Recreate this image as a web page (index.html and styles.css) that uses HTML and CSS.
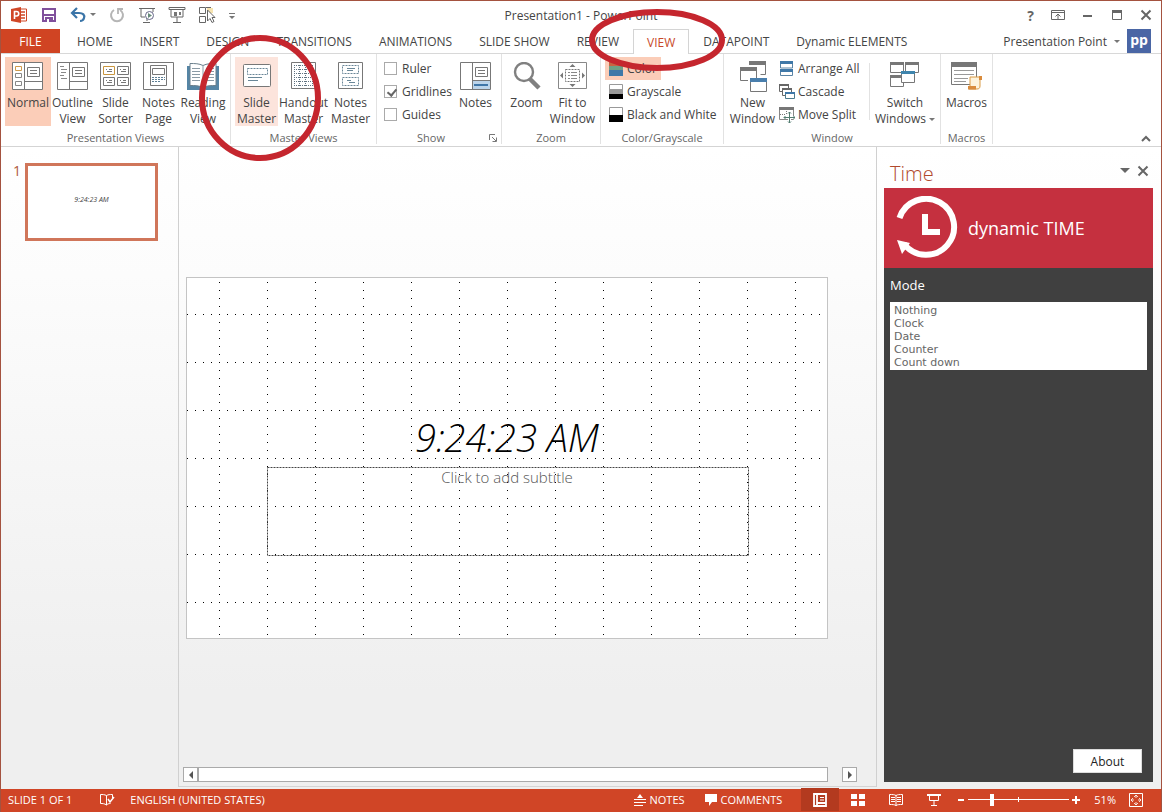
FILE: index.html
```html
<!DOCTYPE html>
<html lang="en">
<head>
<meta charset="utf-8">
<title>Presentation1 - PowerPoint</title>
<link rel="stylesheet" href="styles.css">
</head>
<body>
<div class="window">
  <header class="titlebar">
    <div class="quick">
      <button class="icon-btn" aria-label="PowerPoint"><svg width="18" height="18" viewBox="0 0 18 18"><path d="M9 3h7.500v12H9z" fill="#fff" stroke="#d04727"/><path d="M11 6h4M11 9h4M11 12h4" stroke="#d04727" stroke-width="1.500"/><path d="M1 3l10-2v16L1 15z" fill="#d04727"/><path d="M4.500 13V5.500h2a2 2 0 0 1 0 4.500h-2" fill="none" stroke="#fff" stroke-width="1.600"/></svg></button>
      <button class="icon-btn" aria-label="Save"><svg width="18" height="18" viewBox="0 0 18 18"><path d="M3 3h12v12H3z" fill="#fff" stroke="#80509c" stroke-width="2"/><path d="M3 9h12" stroke="#80509c" stroke-width="2"/><path d="M5 11h8v5H5z" fill="#80509c"/><path d="M7 13h2v3H7z" fill="#fff"/></svg></button>
      <button class="icon-btn" aria-label="Undo"><svg width="26" height="18" viewBox="0 0 26 18"><path d="M2 7h7c4 0 6 2 5 5-.500 2-2 3-4 3" fill="none" stroke="#3b75a8" stroke-width="2.200"/><path d="M7 2L2 7l5 5" fill="none" stroke="#3b75a8" stroke-width="2.200"/><path d="M20 7h6l-3 3z" fill="#777"/></svg></button>
      <button class="icon-btn" aria-label="Repeat"><svg width="18" height="18" viewBox="0 0 18 18"><path d="M6 4a6 6 0 1 0 6 0" fill="none" stroke="#b5b5b5" stroke-width="2"/><path d="M10 8V3h5" fill="none" stroke="#b5b5b5" stroke-width="1.800"/></svg></button>
      <button class="icon-btn" aria-label="Start from beginning"><svg width="18" height="18" viewBox="0 0 18 18"><path d="M1 2.500h16M3 3v8h4M9 15v-3M5 16.500h7M15 3v3" fill="none" stroke="#666"/><circle cx="11.500" cy="9.500" r="4" fill="#fff" stroke="#668" /><path d="M10 7l4 2.500-4 2.500z" fill="#668a7a"/></svg></button>
      <button class="icon-btn" aria-label="Slide show"><svg width="18" height="18" viewBox="0 0 18 18"><path d="M1 1.500h16v2H1zM3 4v7h12V4M9 11v5M5 16.500h8" fill="none" stroke="#666"/><path d="M6 6h3v4H6zM11 6h2v3h-2z" fill="#777"/></svg></button>
      <button class="icon-btn" aria-label="Select objects"><svg width="18" height="18" viewBox="0 0 18 18"><path d="M9 2h6v5H9z" fill="#f6e3b0"/><path d="M1.500 1.500h6v6h-6zM1.500 10.500h6v6h-6zM8 1.500h5" fill="none" stroke="#666"/><path d="M9.500 4v11l2.500-2.500 2 4 2-1-2-4h3z" fill="#fff" stroke="#666"/></svg></button>
      <button class="icon-btn" aria-label="Customize toolbar"><svg width="8" height="12" viewBox="0 0 8 12"><path d="M1 4.500h6" stroke="#777"/><path d="M1 7h6l-3 3z" fill="#777"/></svg></button>
    </div>
    <h1 class="title">Presentation1 - PowerPoint</h1>
    <div class="winctl">
      <button class="icon-btn help" aria-label="Help">?</button>
      <button class="icon-btn" aria-label="Ribbon display options"><svg width="14" height="12" viewBox="0 0 14 12"><path d="M.500 1.500h13v9H.500zM.500 3.500h13M7 10V5M4.500 7.500L7 5l2.500 2.500" fill="none" stroke="#666"/></svg></button>
      <button class="icon-btn" aria-label="Minimize"><svg width="12" height="12" viewBox="0 0 12 12"><path d="M1 7h9" stroke="#666" stroke-width="2"/></svg></button>
      <button class="icon-btn" aria-label="Maximize"><svg width="12" height="12" viewBox="0 0 12 12"><path d="M1.500 2h9v8.500h-9z" fill="none" stroke="#666"/><path d="M1 2.500h10" stroke="#666" stroke-width="3"/></svg></button>
      <button class="icon-btn" aria-label="Close"><svg width="12" height="12" viewBox="0 0 12 12"><path d="M1.500 1.500l9 9M10.500 1.500l-9 9" stroke="#666" stroke-width="2"/></svg></button>
    </div>
  </header>

  <nav class="tabs">
    <button class="tab file">FILE</button>
    <button class="tab">HOME</button>
    <button class="tab">INSERT</button>
    <button class="tab">DESIGN</button>
    <button class="tab">TRANSITIONS</button>
    <button class="tab">ANIMATIONS</button>
    <button class="tab">SLIDE SHOW</button>
    <button class="tab">REVIEW</button>
    <button class="tab active">VIEW</button>
    <button class="tab">DATAPOINT</button>
    <button class="tab">Dynamic ELEMENTS</button>
    <button class="account">Presentation Point<span class="caret"></span><span class="avatar">pp</span></button>
  </nav>

  <section class="ribbon">
    <div class="group views">
      <div class="tools">
        <button class="tool on"><svg width="32" height="28" viewBox="0 0 32 28"><path d="M.500.500h30v27H.500z" fill="#fff" stroke="#777"/><path d="M12.500 1v26M13 19.500h17" stroke="#777"/><path d="M15.500 5.500h12v9h-12zM18 8.500h7M18 11.500h7" fill="none" stroke="#777"/><path d="M3.500 4.500h6v4h-6z" fill="none" stroke="#d09a4a"/><path d="M3.500 11.500h6v4h-6zM3.500 19.500h6v4h-6z" fill="none" stroke="#888"/></svg><span>Normal</span></button>
        <button class="tool"><svg width="32" height="28" viewBox="0 0 32 28"><path d="M.500.500h30v27H.500zM12.500 1v26M13 19.500h17M15.500 5.500h12v9h-12zM18 8.500h7M18 11.500h7" fill="none" stroke="#777"/><path d="M3 4.500h4M4 7.500h6M4 10.500h5M3 13.500h4M4 16.500h6" stroke="#888"/></svg><span>Outline<br>View</span></button>
        <button class="tool"><svg width="32" height="28" viewBox="0 0 32 28"><path d="M.500.500h30v27H.500z" fill="none" stroke="#777"/><path d="M17.500 4.500h11v8h-11zM3.500 15.500h11v8h-11zM17.500 15.500h11v8h-11z" fill="none" stroke="#777"/><path d="M3.500 4.500h11v8h-11z" fill="none" stroke="#c9963f"/><path d="M6 7.500h1M9 7.500h3M7 9.500h5M20 7.500h1M23 7.500h3M21 9.500h5M6 18.500h1M9 18.500h3M7 20.500h5M20 18.500h1M23 18.500h3M21 20.500h5" stroke="#777"/></svg><span>Slide<br>Sorter</span></button>
        <button class="tool"><svg width="32" height="28" viewBox="0 0 32 28"><path d="M.500.500h30v27H.500zM7.500 3.500h16v20h-16zM9.500 6.500h12v6h-12z" fill="none" stroke="#777"/><path d="M9 15.500h13M9 17.500h13M9 19.500h9" stroke="#5d7f95" stroke-dasharray="2 1"/></svg><span>Notes<br>Page</span></button>
        <button class="tool wide"><svg width="32" height="28" viewBox="0 0 32 28"><path d="M0 4h32v24H19l-3-1-3 1H0z" fill="#5585a5"/><path d="M3 1.500c5 0 9 0 13 2 4-2 8-2 13-2v22c-5 0-9 0-13 2-4-2-8-2-13-2z" fill="#fff" stroke="#6b7f8c"/><path d="M16 3v22M5 6.500h8M5 9.500h8M5 12.500h8M5 15.500h8M5 18.500h8M19 6.500h8M19 9.500h8M19 12.500h8M19 15.500h8M19 18.500h8" stroke="#8a9aa5"/></svg><span>Reading<br>View</span></button>
      </div>
      <div class="caption">Presentation Views</div>
    </div>
    <div class="group master">
      <div class="tools">
        <button class="tool hover"><svg width="28" height="28" viewBox="0 0 28 28"><rect x=".500" y="2.500" width="27" height="22" rx="1" fill="#fff" stroke="#777"/><path d="M4.500 6.500h20v6h-20z" fill="none" stroke="#6a8798" stroke-dasharray="2 1"/><path d="M5 15.500h14M5 18.500h10" stroke="#6a8798"/></svg><span>Slide<br>Master</span></button>
        <button class="tool wide"><svg width="26" height="28" viewBox="0 0 26 28"><path d="M.500.500h24v26H.500z" fill="none" stroke="#777"/><path d="M3 3.500h20M3 7.500h20M3 11.500h20M3 15.500h20M3 19.500h20M3 23.500h20" stroke="#5f7280" stroke-dasharray="1 1"/><path d="M3.500 3v21M8.500 3v21M14.500 3v21M21.500 3v21" stroke="#5f7280" stroke-dasharray="1 1"/></svg><span>Handout<br>Master</span></button>
        <button class="tool"><svg width="26" height="28" viewBox="0 0 26 28"><path d="M.500.500h24v26H.500z" fill="none" stroke="#777"/><path d="M4.500 3.500h16v8h-16zM4.500 15.500h16v8h-16z" fill="none" stroke="#6a8798" stroke-dasharray="2 1"/><path d="M9 6.500h8M9 8.500h6M9 18.500h4M11 20.500h6" stroke="#6a8798"/></svg><span>Notes<br>Master</span></button>
      </div>
      <div class="caption">Master Views</div>
    </div>
    <div class="group show">
      <div class="tools">
        <div class="stack checks">
          <label><input type="checkbox">Ruler</label>
          <label><input type="checkbox" checked>Gridlines</label>
          <label><input type="checkbox">Guides</label>
        </div>
        <button class="tool"><svg width="32" height="28" viewBox="0 0 32 28"><path d="M.500.500h30v27H.500z" fill="#fff" stroke="#777"/><path d="M13 19h17v8H13z" fill="#bcd4ea"/><path d="M12.500 1v26M13 18.500h17M15.500 5.500h12v9h-12zM18 8.500h7M18 11.500h7" fill="none" stroke="#777"/><path d="M14 23h14" stroke="#3f76a8" stroke-width="2"/></svg><span>Notes</span></button>
      </div>
      <div class="caption">Show</div>
      <button class="launcher" aria-label="Grid settings"><svg width="8" height="8" viewBox="0 0 8 8"><path d="M.500 6V.500H6M3 3l4 4M7.500 3.500v4h-4" fill="none" stroke="#777"/></svg></button>
    </div>
    <div class="group zooming">
      <div class="tools">
        <button class="tool"><svg width="28" height="28" viewBox="0 0 28 28"><circle cx="11" cy="10" r="9" fill="none" stroke="#808080" stroke-width="2.400"/><path d="M17 17l9 9" stroke="#808080" stroke-width="4.500"/></svg><span>Zoom</span></button>
        <button class="tool wide"><svg width="30" height="28" viewBox="0 0 30 28"><path d="M.500.500h28v26H.500z" fill="none" stroke="#888"/><path d="M7.500 7.500h14v12h-14z" fill="none" stroke="#777" stroke-dasharray="2 1"/><path d="M10 10.500h2M13 10.500h6M10 13.500h2M13 13.500h6M10 16.500h2M13 16.500h6" stroke="#888"/><path d="M11.500 5l3-3 3 3zM11.500 22h6l-3 3zM5 10.500v6l-3-3zM24 10.500v6l3-3z" fill="#777"/></svg><span>Fit to<br>Window</span></button>
      </div>
      <div class="caption">Zoom</div>
    </div>
    <div class="group color">
      <div class="tools">
        <div class="stack">
          <button class="row on"><svg width="14" height="16" viewBox="0 0 14 16"><path d="M0 0h14v5H0z" fill="#c96442"/><path d="M0 5h14v5H0z" fill="#6f9f85"/><path d="M0 9h14v6H0z" fill="#3f78a8"/></svg>Color</button>
          <button class="row"><svg width="14" height="16" viewBox="0 0 14 16"><path d="M.500.500h13v14H.500z" fill="#fff" stroke="#999"/><path d="M0 5h14v5H0z" fill="#999"/><path d="M0 10h14v5H0z"/></svg>Grayscale</button>
          <button class="row"><svg width="14" height="16" viewBox="0 0 14 16"><path d="M.500.500h13v14H.500z" fill="#fff" stroke="#999"/><path d="M0 8h14v7H0z"/></svg>Black and White</button>
        </div>
      </div>
      <div class="caption">Color/Grayscale</div>
    </div>
    <div class="group">
      <div class="tools">
        <button class="tool wide newwin"><svg width="28" height="32" viewBox="0 0 28 32"><path d="M10.500.500h16v13h-5M1.500 7.500h16v12M1.500 7.500v12H9" fill="none" stroke="#777"/><path d="M10 0h17v4H10zM1 6h17v4H1z" fill="#777"/><path d="M11.500 17.500h16v13h-16z" fill="#fff" stroke="#777"/><path d="M11 17h17v4H11z" fill="#4a7fad"/></svg><span>New<br>Window</span></button>
        <div class="stack arrange">
          <button class="row"><svg width="16" height="16" viewBox="0 0 16 16"><path d="M1.500 1h12v6h-12zM1.500 8.500h12v6h-12z" fill="#fff" stroke="#5b84a5"/><path d="M1 0h13v3H1zM1 8h13v3H1z" fill="#3f78a8"/></svg>Arrange All</button>
          <button class="row"><svg width="16" height="16" viewBox="0 0 16 16"><path d="M.500.500h9v7h-9z" fill="#fff" stroke="#666"/><path d="M0 1h10" stroke="#666" stroke-width="2"/><path d="M3.500 4.500h9v7h-9z" fill="#fff" stroke="#666"/><path d="M3 5h10" stroke="#666" stroke-width="2"/><path d="M6.500 8.500h9v6h-9z" fill="#fff" stroke="#4c7a8c"/><path d="M6 9h10" stroke="#3f78a8" stroke-width="2"/></svg>Cascade</button>
          <button class="row"><svg width="16" height="16" viewBox="0 0 16 16"><path d="M.500.500h14v12H.500z" fill="#fff" stroke="#888"/><path d="M0 0h15v3H0z" fill="#777"/><path d="M1 7.500h6M7.500 4v3" stroke="#777" stroke-dasharray="1 1"/><path d="M10.500 5v11M5 10.500h11" stroke="#fff" stroke-width="3"/><path d="M10.500 5v11M5 10.500h11M9 6.500l1.500-1.500L12 6.500M9 14.500l1.500 1.500 1.500-1.500M6.500 9L5 10.500 6.500 12M14.500 9l1.500 1.500-1.500 1.500" fill="none" stroke="#527c70"/></svg>Move Split</button>
        </div>
        <span class="divider"></span>
        <button class="tool switch"><svg width="30" height="28" viewBox="0 0 30 28"><path d="M.500.500h13v10H.500zM15.500.500h13v10h-13zM.500 14.500h13v10H.500z" fill="#fff" stroke="#777"/><path d="M0 0h14v3H0zM15 0h14v3H15zM0 13h14v3H0z" fill="#777"/><path d="M11.500 9.500h13v11h-13z" fill="#fff" stroke="#777"/><path d="M11 9h14v3H11z" fill="#3f85ad"/></svg><span>Switch<br>Windows<i class="caret"></i></span></button>
      </div>
      <div class="caption">Window</div>
    </div>
    <div class="group">
      <div class="tools">
        <button class="tool"><svg width="32" height="28" viewBox="0 0 32 28"><path d="M.500.500h25v22H.500z" fill="#fff" stroke="#777"/><path d="M0 0h26v5H0z" fill="#777"/><path d="M3 8.500h20M3 12.500h20M3 16.500h14M3 19.500h12" stroke="#999"/><path d="M19 26V15h10v9c0 2-1 3-3 3h-8" fill="#fdf3dc" stroke="#d99a45"/><path d="M17 24h8v3.500h-8zM28 14h3v4h-3z" fill="#d98b3c"/></svg><span>Macros</span></button>
      </div>
      <div class="caption">Macros</div>
    </div>
    <button class="collapse" aria-label="Collapse ribbon"><svg width="10" height="8" viewBox="0 0 10 8"><path d="M1 6l4-4 4 4" fill="none" stroke="#666" stroke-width="2"/></svg></button>
  </section>

  <main class="body">
    <aside class="thumbs">
      <span class="num">1</span>
      <button class="thumb">9:24:23 AM</button>
    </aside>
    <section class="stage">
      <div class="canvas">
        <div class="slide">
          <svg class="grid" viewBox="0 0 640 360">
            <path d="M0 36.500H636M0 84.500H636M0 132.500H636M0 180.500H636M0 228.500H636M0 276.500H636M0 324.500H636" stroke="#000" stroke-dasharray="1 7"/>
            <path d="M32.500 4V360M80.500 4V360M128.500 4V360M176.500 4V360M224.500 4V360M272.500 4V360M320.500 4V360M368.500 4V360M416.500 4V360M464.500 4V360M512.500 4V360M560.500 4V360M608.500 4V360" stroke="#000" stroke-dasharray="1 7"/>
            <rect x="80.500" y="189.500" width="481" height="88" fill="none" stroke="#444" stroke-dasharray="2 1"/>
          </svg>
          <p class="clock">9:24:23 AM</p>
          <p class="subtitle">Click to add subtitle</p>
        </div>
      </div>
      <div class="scroll">
        <button aria-label="Scroll left"><svg width="6" height="8" viewBox="0 0 6 8"><path d="M5 0v8L1 4z" fill="#555"/></svg></button>
        <div class="bar"></div>
        <button aria-label="Scroll right"><svg width="6" height="8" viewBox="0 0 6 8"><path d="M1 0v8l4-4z" fill="#555"/></svg></button>
      </div>
    </section>
    <aside class="pane">
      <div class="panehead">
        <h2>Time</h2>
        <button class="icon-btn" aria-label="Pane options"><svg width="10" height="6" viewBox="0 0 10 6"><path d="M0 0h10L5 5z" fill="#666"/></svg></button>
        <button class="icon-btn" aria-label="Close pane"><svg width="12" height="12" viewBox="0 0 12 12"><path d="M1.500 1.500l9 9M10.500 1.500l-9 9" stroke="#666" stroke-width="2"/></svg></button>
      </div>
      <div class="banner">
        <svg width="62" height="64" viewBox="0 0 62 64"><path d="M3.500 22A28 28 0 1 1 8 48" fill="none" stroke="#fff" stroke-width="6"/><path d="M1 44l13 3-8 11z" fill="#fff"/><path d="M29 18v18h15" fill="none" stroke="#fff" stroke-width="6"/></svg>
        <span>dynamic TIME</span>
      </div>
      <div class="settings">
        <label for="mode">Mode</label>
        <select id="mode" size="5">
          <option>Nothing</option>
          <option>Clock</option>
          <option>Date</option>
          <option>Counter</option>
          <option>Count down</option>
        </select>
        <button class="about">About</button>
      </div>
    </aside>
  </main>

  <footer class="status">
    <span>SLIDE 1 OF 1</span>
    <button class="icon-btn spell" aria-label="Proofing"><svg width="16" height="14" viewBox="0 0 16 14"><path d="M7.500 2.500c-2-1-4-1-6-1v9c2 0 4 0 6 1.500 1-1 2-1.500 4-1.500M7.500 2.500V12M7.500 2.500c2-1 3-1 6-1V5" fill="none" stroke="#fff"/><path d="M9 6l2 3 4-5" fill="none" stroke="#fff" stroke-width="1.500"/></svg></button>
    <button class="text">ENGLISH (UNITED STATES)</button>
    <span class="spacer"></span>
    <button class="text notes"><svg width="12" height="12" viewBox="0 0 12 12"><path d="M0 5.500h12M0 8.500h12M0 11.500h9" stroke="#fff"/><path d="M3 4l3-4 3 4z" fill="#fff"/></svg>NOTES</button>
    <button class="text comments"><svg width="12" height="12" viewBox="0 0 12 12"><path d="M0 0h12v8H7l-3 4V8H0z" fill="#fff"/></svg>COMMENTS</button>
    <button class="view on" aria-label="Normal view"><svg width="14" height="14" viewBox="0 0 14 14"><path d="M1 1h12v12H1zM4 1v12M4 10h9" fill="none" stroke="#fff" stroke-width="1.800"/><path d="M7 4.500h4M7 7h4" stroke="#fff"/></svg></button>
    <button class="view" aria-label="Slide sorter"><svg width="14" height="14" viewBox="0 0 14 14"><path d="M0 1h6v5H0zM8 1h6v5H8zM0 8h6v5H0zM8 8h6v5H8z" fill="#fff"/></svg></button>
    <button class="view" aria-label="Reading view"><svg width="14" height="14" viewBox="0 0 14 14"><path d="M.500 1.500c3 0 5 0 6.500 1 1.500-1 3.500-1 6.500-1v10c-3 0-5 0-6.500 1-1.500-1-3.500-1-6.500-1zM7 2v11M2 4.500h4M2 6.500h4M2 8.500h4M8 4.500h4M8 6.500h4M8 8.500h4" fill="none" stroke="#fff"/></svg></button>
    <button class="view" aria-label="Slide show"><svg width="14" height="14" viewBox="0 0 14 14"><path d="M0 2h14" stroke="#fff" stroke-width="2"/><path d="M2.500 2v5.500h9V2M7 8v4M4 12.500h6" fill="none" stroke="#fff"/></svg></button>
    <button class="icon-btn" aria-label="Zoom out"><svg width="8" height="8" viewBox="0 0 8 8"><path d="M1 4h6" stroke="#fff" stroke-width="2"/></svg></button>
    <input class="zoom" type="range" min="10" max="400" value="98" aria-label="Zoom">
    <button class="icon-btn" aria-label="Zoom in"><svg width="8" height="8" viewBox="0 0 8 8"><path d="M0 4h8M4 0v8" stroke="#fff" stroke-width="2"/></svg></button>
    <button class="text pct">51%</button>
    <button class="icon-btn" aria-label="Fit slide"><svg width="14" height="14" viewBox="0 0 14 14"><path d="M.500.500h13v13H.500z" fill="none" stroke="#fff"/><path d="M7 2v3M7 9v3M2 7h3M9 7h3M5 4l2-2 2 2M5 10l2 2 2-2M4 5L2 7l2 2M10 5l2 2-2 2" fill="none" stroke="#fff" stroke-width=".800"/></svg></button>
  </footer>

  <svg class="marks" width="740" height="170" viewBox="0 0 740 170"><ellipse cx="260" cy="98" rx="58" ry="60"/><ellipse cx="657" cy="40" rx="65" ry="28"/></svg>
</div>
</body>
</html>
```
FILE: styles.css
```css
* { box-sizing: border-box; }
body {
  margin: 0;
  font-family: "Open Sans", "Noto Sans", sans-serif;
  font-size: 12px;
  color: #444;
}
button {
  font: inherit;
  color: inherit;
  background: none;
  border: 0;
  padding: 0;
  margin: 0;
}
svg { display: block; flex: none; }
h1, h2, p { margin: 0; font-weight: 400; }

.window {
  position: relative;
  display: flex;
  flex-direction: column;
  height: 100vh;
  min-height: 600px;
  border: 1px solid #a4523f;
  border-bottom: 0;
  background: #fff;
}
.icon-btn { display: flex; align-items: center; justify-content: center; }

.titlebar {
  display: grid;
  grid-template-columns: 1fr auto 1fr;
  align-items: center;
  height: 28px;
  padding: 0 9px;
}
.title { font-size: 12px; }
.quick { display: flex; align-items: center; gap: 12px; }
.winctl { display: flex; align-items: center; justify-content: flex-end; gap: 17px; }
.help { font-size: 14px; font-weight: 700; color: #666; }

.tabs {
  display: flex;
  gap: 1px;
  height: 25px;
  border-bottom: 1px solid #d8d8d8;
}
.tab { padding: 0 13px; white-space: nowrap; }
.file {
  width: 59px;
  margin-right: 3px;
  background: #d04423;
  color: #fff;
}
.active {
  margin-bottom: -1px;
  border: 1px solid #d4d4d4;
  border-bottom: 0;
  background: #fff;
  color: #c8492a;
}
.account {
  display: flex;
  align-items: center;
  margin-left: auto;
  margin-right: 10px;
}
.caret {
  display: inline-block;
  border: 3px solid transparent;
  border-top-color: #777;
  border-bottom: 0;
}
.account .caret { margin: 0 7px; }
.avatar {
  width: 24px;
  height: 24px;
  background: #4a66a5;
  color: #fff;
  font-size: 14px;
  font-weight: 700;
  line-height: 22px;
}

.ribbon {
  position: relative;
  display: flex;
  height: 93px;
  border-bottom: 1px solid #d4d4d4;
  padding-bottom: 2px;
}
.group {
  position: relative;
  display: flex;
  flex-direction: column;
  padding: 3px 4px 0;
  border-right: 1px solid #e2e2e2;
}
.tools { flex: none; display: flex; height: 69px; }
.tool {
  display: flex;
  flex-direction: column;
  align-items: center;
  gap: 5px;
  width: 43px;
  padding-top: 5px;
  line-height: 16px;
  white-space: nowrap;
}
.tool span { margin: 0 -4px; }
.wide { width: 49px; }
.views .wide, .views .on { width: 46px; }
.master .tools { gap: 1px; }
.zooming { padding-left: 3px; padding-right: 3px; }
.newwin { padding-top: 4px; gap: 2px; }
.switch { width: 62px; }
.switch .caret { margin: 0 0 2px 3px; }
.on { background: #fbcdb8; }
.hover { background: #fce4dc; }
.caption {
  padding-top: 4px;
  line-height: 16px;
  font-size: 11px;
  text-align: center;
  color: #666;
}
.show .caption { padding-right: 16px; }
.stack { display: flex; flex-direction: column; align-items: flex-start; }
.row, .checks label {
  display: flex;
  align-items: center;
  height: 23px;
  white-space: nowrap;
}
.row { gap: 4px; padding: 0 4px; }
.checks { width: 69px; margin: 0 1px 0 3px; }
.checks input {
  appearance: none;
  position: relative;
  width: 13px;
  height: 13px;
  margin: 0 5px 0 0;
  border: 1px solid #aaa;
  background: #fff;
}
.checks input:checked::after {
  content: "";
  position: absolute;
  left: 4px;
  top: 1px;
  width: 4px;
  height: 7px;
  border: solid #666;
  border-width: 0 2px 2px 0;
  transform: rotate(40deg);
}
.launcher { position: absolute; right: 4px; bottom: 0; padding: 2px 0; }
.color { width: 123px; }
.arrange { width: 90px; }
.arrange .row { padding: 0 2px; gap: 3px; }
.divider { width: 1px; height: 57px; margin: 6px 4px 0 2px; background: #e2e2e2; }
.collapse { position: absolute; right: 10px; bottom: 3px; }

.body {
  flex: 1;
  display: grid;
  grid-template-columns: 178px minmax(0, 1fr) 285px;
  min-height: 0;
  padding-bottom: 2px;
  background: linear-gradient(#fff 0%, #fcfcfc 20%, #efefef 85%, #efefef 100%);
}
.thumbs {
  display: flex;
  align-items: flex-start;
  gap: 4px;
  padding: 16px 20px 0 12px;
  border-right: 1px solid #d0d0d0;
}
.num { width: 8px; font-size: 14px; line-height: 16px; color: #b05a3c; }
.thumb {
  flex: 1;
  aspect-ratio: 133 / 78;
  padding-bottom: 6px;
  border: 3px solid #d0765a;
  background: #fff;
  font-size: 7px;
  font-style: italic;
}
.stage {
  display: flex;
  flex-direction: column;
  padding: 0 19px 4px 4px;
  border-bottom: 1px solid #d4d4d4;
}
.canvas { flex: 1; display: flex; align-items: center; padding: 1px 29px 0 3px; }
.slide {
  position: relative;
  box-sizing: content-box;
  flex: 1;
  aspect-ratio: 16 / 9;
  border: 1px solid #c4c4c4;
  background: #fff;
}
.grid { width: 100%; height: 100%; }
.clock, .subtitle {
  position: absolute;
  left: 0;
  right: 0;
  text-align: center;
  font-weight: 300;
}
.clock { top: 38%; font-size: 38px; line-height: 46px; font-style: italic; color: #000; }
.subtitle { top: 53%; font-size: 15px; line-height: 18px; color: #555; }
.scroll { display: flex; height: 15px; }
.scroll button {
  display: flex;
  align-items: center;
  justify-content: center;
  width: 15px;
  border: 1px solid #aaa;
  background: #fff;
}
.bar { flex: 1; margin-right: 14px; border: 1px solid #aaa; background: #fff; }

.pane {
  display: flex;
  flex-direction: column;
  padding: 10px 8px 5px 7px;
  border-left: 1px solid #d0d0d0;
}
.panehead { display: flex; align-items: center; height: 31px; padding: 0 4px 4px 6px; gap: 7px; }
.panehead h2 { flex: 1; padding-top: 6px; font-size: 20px; font-weight: 300; color: #b0492c; }
.banner {
  display: flex;
  align-items: center;
  gap: 10px;
  height: 80px;
  padding: 0 12px;
  background: #c5303f;
  color: #fff;
  font-size: 18px;
}
.settings {
  flex: 1;
  display: flex;
  flex-direction: column;
  padding: 8px 6px 9px;
  background: #404040;
}
.settings label { color: #fff; font-size: 13px; line-height: 18px; }
.settings select {
  height: 68px;
  margin-top: 8px;
  padding: 2px;
  border: 0;
  border-radius: 0;
  overflow: hidden;
  background: #fff;
  font: 11px "DejaVu Sans", sans-serif;
}
.settings option { padding: 0 2px; min-height: 13px; line-height: 13px; color: #666; }
.about {
  width: 69px;
  height: 24px;
  margin: auto 5px 0 auto;
  border: 1px solid #ddd;
  background: #fff;
  color: #222;
}

.status {
  display: flex;
  align-items: center;
  height: 23px;
  padding: 0 18px 2px 7px;
  background: #d04526;
  color: #fff;
  font-size: 11px;
}
.status .text { display: flex; align-items: center; gap: 4px; }
.spell { margin: 0 15px 0 27px; }
.spacer { flex: 1; }
.notes { margin-right: 20px; }
.comments { margin-right: 19px; }
.view {
  display: flex;
  align-items: center;
  justify-content: center;
  width: 38px;
  height: 23px;
}
.view.on { background: #b33a1f; }
.status .view + .icon-btn { margin-left: 4px; }
.pct { margin: 0 13px 0 14px; }
.zoom {
  appearance: none;
  width: 101px;
  height: 12px;
  margin: 0 3px;
  background:
    linear-gradient(#fff, #fff) center / 100% 1px no-repeat,
    linear-gradient(#fff, #fff) center / 1px 5px no-repeat;
}
.zoom::-webkit-slider-thumb {
  appearance: none;
  width: 4px;
  height: 12px;
  background: #fff;
}

.marks {
  position: absolute;
  left: -1px;
  top: -1px;
  pointer-events: none;
  fill: none;
  stroke: #c5262e;
  stroke-width: 6px;
}
```
